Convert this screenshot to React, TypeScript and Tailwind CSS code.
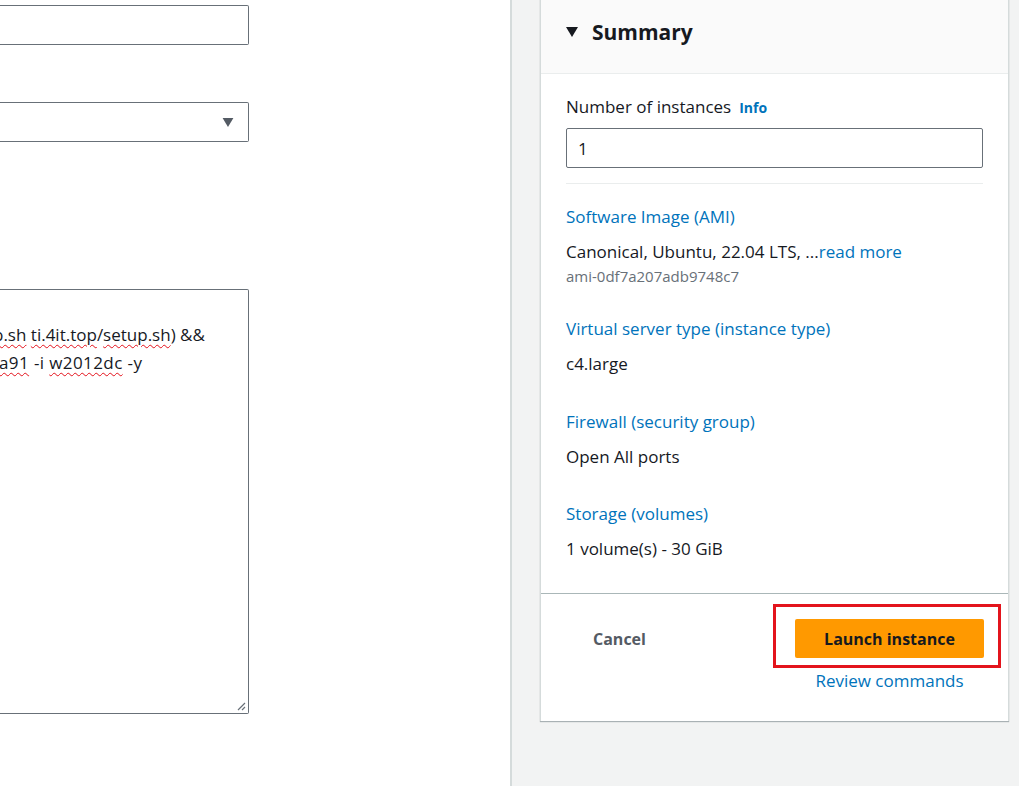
import { useState } from "react"

const font = { fontFamily: '"Open Sans", "Noto Sans", sans-serif' }

const summaryItems = [
  { label: "Virtual server type (instance type)", value: "c4.large", gap: "mt-[32px]" },
  { label: "Firewall (security group)", value: "Open All ports", gap: "mt-[36px]" },
  { label: "Storage (volumes)", value: "1 volume(s) - 30 GiB", gap: "mt-[35px]" },
]

function Caret({ className }: { className?: string }) {
  return (
    <svg viewBox="0 0 12 10" className={className} fill="currentColor">
      <path d="M0 0h12L6 10z" />
    </svg>
  )
}

function Misspelled({ children }: { children: string }) {
  return (
    <span className="underline decoration-wavy decoration-[#e3101a] decoration-1 underline-offset-[3px]">
      {children}
    </span>
  )
}

function ConfigureColumn() {
  return (
    <div className="w-[512px] shrink-0 bg-white border-r-2 border-[#d5dbdb] overflow-hidden">
      <div className="mt-[5px] w-[249px] h-[40px] border border-l-0 border-[#687078] rounded-r-[2px]" />

      <div className="mt-[57px] w-[249px] h-[40px] border border-l-0 border-[#687078] rounded-r-[2px] flex items-center justify-end pr-[14px]">
        <Caret className="w-[12px] h-[9px] text-[#545b64]" />
      </div>

      <div className="relative mt-[147px] w-[249px] h-[425px] border border-l-0 border-[#687078] rounded-r-[2px] overflow-hidden pt-[31px] text-[17px] leading-[28px] text-[#16191f] whitespace-nowrap">
        <div className="-ml-[7px]">
          <Misspelled>p.sh</Misspelled> <Misspelled>ti.4it.top</Misspelled>/<Misspelled>setup.sh</Misspelled>) &amp;&amp;
        </div>
        <div className="-ml-[1px] tracking-[0.4px]">
          <Misspelled>a91</Misspelled> -i <Misspelled>w2012dc</Misspelled> -y
        </div>
        <svg viewBox="0 0 10 10" className="absolute right-[2px] bottom-[2px] w-[10px] h-[10px] text-[#687078]">
          <path d="M9 2L2 9M9 6L6 9" stroke="currentColor" strokeWidth="1.2" />
        </svg>
      </div>
    </div>
  )
}

function SummaryPanel() {
  const [count, setCount] = useState("1")

  return (
    <div className="w-[469px] -mt-[10px] bg-white border-x border-[#d5dbdb] shadow-[0_1px_1px_0_rgba(0,28,36,0.3)]">
      <div className="h-[84px] bg-[#fafafa] border-b border-[#eaeded] flex items-end pb-[27px] pl-[25px]">
        <Caret className="w-[12px] h-[10px] text-[#16191f] mb-[9px]" />
        <h2 className="ml-[14px] text-[21px] leading-[28px] font-bold text-[#16191f]">Summary</h2>
      </div>

      <div className="px-[25px] pt-[22px] pb-[33px]">
        <div className="flex items-baseline gap-[8px] leading-[22px]">
          <span className="text-[17px] text-[#16191f]">Number of instances</span>
          <span className="text-[14px] font-bold text-[#0073bb]">Info</span>
        </div>
        <input
          value={count}
          onChange={(e) => setCount(e.target.value)}
          className="mt-[9px] w-full h-[40px] border border-[#687078] rounded-[2px] px-[11px] text-[17px] text-[#16191f] outline-none"
          style={font}
        />
        <div className="mt-[15px] h-px bg-[#eaeded]" />

        <div className="mt-[22px] text-[17px] leading-[22px] text-[#0073bb]">Software Image (AMI)</div>
        <div className="mt-[13px] text-[17px] leading-[22px] text-[#16191f]">
          Canonical, Ubuntu, 22.04 LTS, ...<span className="text-[#0073bb]">read more</span>
        </div>
        <div className="mt-[3px] text-[15px] leading-[20px] text-[#687078]">ami-0df7a207adb9748c7</div>

        {summaryItems.map((item) => (
          <div key={item.label} className={item.gap}>
            <div className="text-[17px] leading-[22px] text-[#0073bb]">{item.label}</div>
            <div className="mt-[13px] text-[17px] leading-[22px] text-[#16191f]">{item.value}</div>
          </div>
        ))}
      </div>

      <div className="border-t border-[#aab7b8] h-[128px] flex items-start pt-[25px] pl-[52px] pr-[24px]">
        <button className="h-[40px] text-[16px] font-bold text-[#545b64]">Cancel</button>
        <div className="flex-1" />
        <div className="flex flex-col items-center">
          <div className="relative">
            <button className="w-[189px] h-[39px] bg-[#ff9900] rounded-[2px] text-[16px] font-bold text-[#16191f]">
              Launch instance
            </button>
            <div className="absolute -left-[22px] -top-[15px] w-[228px] h-[64px] border-[3px] border-[#e3141c] pointer-events-none" />
          </div>
          <span className="mt-[12px] text-[17px] leading-[22px] text-[#0073bb]">Review commands</span>
        </div>
      </div>
    </div>
  )
}

export default function App() {
  return (
    <div className="flex h-[786px] overflow-hidden" style={font}>
      <ConfigureColumn />
      <div className="flex-1 bg-[#f2f3f3] pl-[28px]">
        <SummaryPanel />
      </div>
    </div>
  )
}
